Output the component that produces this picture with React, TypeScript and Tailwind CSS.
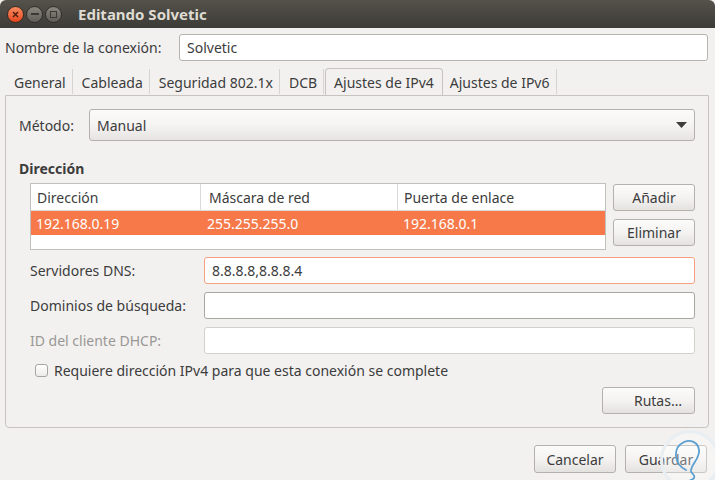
import React from "react";

const Btn = ({ children, className = "" }: { children: React.ReactNode; className?: string }) => (
  <div
    className={`flex items-center justify-center rounded-[3px] border border-[#b4b1ac] bg-gradient-to-b from-[#fbfbfa] via-[#f4f3f2] to-[#e4e2df] text-[14px] text-[#3c3c3c] ${className}`}
  >
    {children}
  </div>
);

const Input = ({ value = "", className = "" }: { value?: string; className?: string }) => (
  <div
    className={`flex items-center rounded-[3px] border bg-white px-[7px] text-[14px] text-[#3c3c3c] ${className}`}
  >
    {value}
  </div>
);

export default function App() {
  const tabs = ["General", "Cableada", "Seguridad 802.1x", "DCB"];
  return (
    <div
      className="relative w-[715px] h-[480px] overflow-hidden bg-[#f2f1f0] text-[#3c3c3c]"
      style={{ fontFamily: '"Noto Sans", "Open Sans", sans-serif' }}
    >
      {/* Title bar */}
      <div className="flex h-[28px] items-center rounded-t-[6px] bg-gradient-to-b from-[#55524b] to-[#3c3b37] pl-[7px]">
        <div className="flex items-center gap-[2px]">
          <div className="flex h-[17px] w-[17px] items-center justify-center rounded-full border border-[#3a2a22] bg-gradient-to-b from-[#f88b5e] to-[#e5451c]">
            <svg width="7" height="7" viewBox="0 0 7 7">
              <path d="M1 1 L6 6 M6 1 L1 6" stroke="#4a1a0c" strokeWidth="1.4" />
            </svg>
          </div>
          <div className="flex h-[17px] w-[17px] items-center justify-center rounded-full border border-[#2f2e2a] bg-gradient-to-b from-[#8a877f] to-[#5f5d57]">
            <div className="h-[2px] w-[8px] bg-[#3a3935]" />
          </div>
          <div className="flex h-[17px] w-[17px] items-center justify-center rounded-full border border-[#2f2e2a] bg-gradient-to-b from-[#8a877f] to-[#5f5d57]">
            <div className="h-[7px] w-[7px] border-[1.5px] border-[#3a3935]" />
          </div>
        </div>
        <div className="ml-[16px] text-[15px] font-bold text-[#dfdbd2]">Editando Solvetic</div>
      </div>

      <div className="px-[5px]">
        {/* Name row */}
        <div className="mt-[6px] mr-[2px] flex h-[27px] items-center">
          <div className="w-[174px] text-[14px]">Nombre de la conexión:</div>
          <Input value="Solvetic" className="h-[27px] flex-1 border-[#b6b4b0]" />
        </div>

        {/* Tabs */}
        <div className="mt-[7px] flex h-[27px] items-stretch text-[14px]">
          {tabs.map((t) => (
            <div key={t} className="flex items-center">
              <div className="pl-[9px] pr-[6px] pt-[1px]">{t}</div>
              <div className="h-[25px] w-px bg-[#d6d4d0]" />
            </div>
          ))}
          <div className="ml-[1px] flex items-center rounded-t-[4px] border border-b-0 border-[#c7c4bf] bg-[#f2f1f0] px-[8px] pt-[1px]">
            Ajustes de IPv4
          </div>
          <div className="flex items-center">
            <div className="px-[7px] pt-[1px]">Ajustes de IPv6</div>
            <div className="h-[25px] w-px bg-[#d6d4d0]" />
          </div>
        </div>

        {/* Panel */}
        <div className="mr-[1px] h-[333px] rounded-b-[4px] border border-[#c7c4bf] px-[13px] pt-[13px] text-[14px]">
          {/* Method */}
          <div className="flex h-[32px] items-center">
            <div className="w-[70px]">Método:</div>
            <div className="flex h-[32px] flex-1 items-center justify-between rounded-[3px] border border-[#b4b1ac] bg-gradient-to-b from-[#fbfbfa] via-[#f5f4f3] to-[#e6e4e1] pl-[7px] pr-[7px]">
              <span>Manual</span>
              <svg width="11" height="6" viewBox="0 0 11 6">
                <path d="M0 0 L11 0 L5.5 6 Z" fill="#3c3c3c" />
              </svg>
            </div>
          </div>

          <div className="mt-[19px] font-bold leading-[18px]">Dirección</div>

          <div className="mt-[5px] flex pl-[11px]">
            {/* Table */}
            <div className="h-[67px] w-[577px] border border-[#c2c0bc] bg-white">
              <div className="flex h-[27px] items-center border-b border-[#dcdad6]">
                <div className="flex h-full w-[170px] items-center border-r border-[#dcdad6] pl-[6px]">Dirección</div>
                <div className="flex h-full w-[197px] items-center border-r border-[#dcdad6] pl-[8px]">Máscara de red</div>
                <div className="flex h-full items-center pl-[6px]">Puerta de enlace</div>
              </div>
              <div className="flex h-[24px] items-center bg-[#f7794a] text-white">
                <div className="w-[171px] pl-[5px]">192.168.0.19</div>
                <div className="w-[198px] pl-[5px]">255.255.255.0</div>
                <div className="pl-[3px]">192.168.0.1</div>
              </div>
            </div>
            <div className="ml-[7px] flex flex-col gap-[8px] pt-px">
              <Btn className="h-[27px] w-[82px]">Añadir</Btn>
              <Btn className="h-[27px] w-[82px]">Eliminar</Btn>
            </div>
          </div>

          {/* Form rows */}
          <div className="mt-[7px] flex flex-col gap-[8px] pl-[11px]">
            <div className="flex h-[27px] items-center">
              <div className="w-[174px]">Servidores DNS:</div>
              <Input value="8.8.8.8,8.8.8.4" className="h-[27px] flex-1 border-[#f3a07f]" />
            </div>
            <div className="flex h-[27px] items-center">
              <div className="w-[174px]">Dominios de búsqueda:</div>
              <Input className="h-[27px] flex-1 border-[#a9a7a3]" />
            </div>
            <div className="flex h-[27px] items-center">
              <div className="w-[174px] text-[#9a9895]">ID del cliente DHCP:</div>
              <Input className="h-[27px] flex-1 border-[#d3d1cd] bg-[#f7f7f6]" />
            </div>
          </div>

          <div className="mt-[6px] flex h-[20px] items-center pl-[16px]">
            <div className="h-[13px] w-[13px] rounded-[3px] border border-[#a8a5a0] bg-gradient-to-b from-white to-[#ecebe9]" />
            <div className="ml-[6px]">Requiere dirección IPv4 para que esta conexión se complete</div>
          </div>

          <div className="mt-[7px] flex justify-end">
            <Btn className="h-[27px] w-[93px] justify-end pr-[12px]">Rutas…</Btn>
          </div>
        </div>

        {/* Bottom buttons */}
        <div className="mt-[17px] mr-[3px] flex justify-end gap-[9px]">
          <Btn className="h-[28px] w-[82px]">Cancelar</Btn>
          <Btn className="h-[28px] w-[82px]">Guardar</Btn>
        </div>
      </div>

      {/* Watermark */}
      <div className="absolute left-[660px] top-[430px] h-[60px] w-[60px] rounded-full border-[3px] border-[#e8eef2] bg-white/30">
        <svg width="60" height="60" viewBox="0 0 60 60" className="absolute -left-[3px] -top-[3px]">
          <path
            d="M26 40 C14 34 12 18 24 12 C34 8 42 16 38 26 C36 32 32 34 31 40 C30 44 36 44 34 48 C32 51 27 50 28 53 C30 56 34 54 36 55"
            fill="none"
            stroke="#5a9fd0"
            strokeWidth="1.8"
            strokeLinecap="round"
          />
        </svg>
      </div>
    </div>
  );
}
